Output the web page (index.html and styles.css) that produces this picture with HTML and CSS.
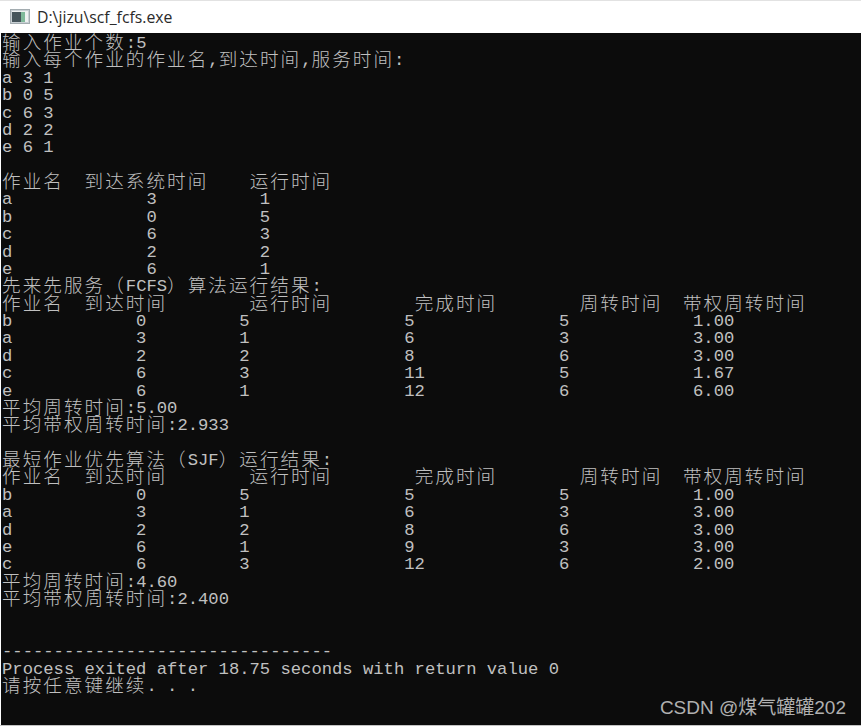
FILE: index.html
```html
<!DOCTYPE html>
<html lang="zh-CN">
<head>
<meta charset="utf-8">
<title>scf_fcfs.exe</title>
<link rel="stylesheet" href="styles.css">
</head>
<body>
<div class="window">
<header class="titlebar">
<svg class="app-icon" width="20" height="15" viewBox="0 0 20 15" aria-hidden="true">
<rect x="0.5" y="0.5" width="19" height="14" fill="#c9d0d4" stroke="#a3acb0"/>
<rect x="2" y="2" width="16" height="11" fill="#eef1f1"/>
<rect x="2" y="3" width="9" height="10" fill="#46555b"/>
<rect x="11" y="3" width="4" height="10" fill="#7fb99a"/>
</svg>
<span class="title">D:\jizu\scf_fcfs.exe</span>
</header>
<pre class="console"><span class="z">输入作业个数</span>:5
<span class="z">输入每个作业的作业名</span>,<span class="z">到达时间</span>,<span class="z">服务时间</span>:
a 3 1
b 0 5
c 6 3
d 2 2
e 6 1

<span class="z">作业名</span>  <span class="z">到达系统时间</span>    <span class="z">运行时间</span>
a             3          1
b             0          5
c             6          3
d             2          2
e             6          1
<span class="z">先来先服务（</span>FCFS<span class="z">）算法运行结果</span>:
<span class="z">作业名</span>  <span class="z">到达时间</span>        <span class="z">运行时间</span>        <span class="z">完成时间</span>        <span class="z">周转时间</span>  <span class="z">带权周转时间</span>
b            0         5               5              5            1.00
a            3         1               6              3            3.00
d            2         2               8              6            3.00
c            6         3               11             5            1.67
e            6         1               12             6            6.00
<span class="z">平均周转时间</span>:5.00
<span class="z">平均带权周转时间</span>:2.933

<span class="z">最短作业优先算法（</span>SJF<span class="z">）运行结果</span>:
<span class="z">作业名</span>  <span class="z">到达时间</span>        <span class="z">运行时间</span>        <span class="z">完成时间</span>        <span class="z">周转时间</span>  <span class="z">带权周转时间</span>
b            0         5               5              5            1.00
a            3         1               6              3            3.00
d            2         2               8              6            3.00
e            6         1               9              3            3.00
c            6         3               12             6            2.00
<span class="z">平均周转时间</span>:4.60
<span class="z">平均带权周转时间</span>:2.400


--------------------------------
Process exited after 18.75 seconds with return value 0
<span class="z">请按任意键继续</span>. . .</pre>
<div class="watermark">CSDN @煤气罐罐202</div>
</div>
</body>
</html>
```
FILE: styles.css
```css
html, body {
  margin: 0;
  padding: 0;
  background: #c4c4c4;
}
body {
  width: 861px;
  height: 726px;
  overflow: hidden;
}
.window {
  position: relative;
  display: flex;
  flex-direction: column;
  height: 725px;
  border-top: 1px solid #e2e2e2;
  box-sizing: border-box;
  background: #ffffff;
}
.titlebar {
  display: flex;
  align-items: center;
  gap: 7px;
  height: 32px;
  padding-left: 10px;
  padding-bottom: 1px;
  background: #ffffff;
  box-sizing: border-box;
}
.title {
  font-family: "Open Sans", "Liberation Sans", sans-serif;
  font-size: 15.8px;
  color: #2a2a2a;
}
.console {
  flex: 1;
  margin: 0 0 0 1px;
  padding: 2px 0 0 1px;
  background: #0c0c0c;
  color: #c0c0c0;
  font-family: "Liberation Mono", "Noto Sans CJK SC", monospace;
  font-size: 17.2px;
  line-height: 17.38px;
  overflow: hidden;
  white-space: pre;
}
.z {
  font-family: "Noto Sans CJK SC", sans-serif;
  font-size: 18.6px;
  letter-spacing: 2.04px;
  line-height: 0;
  font-weight: 300;
  vertical-align: -1px;
}
.watermark {
  position: absolute;
  right: 15px;
  bottom: 6px;
  font-family: "Liberation Sans", "Noto Sans CJK SC", sans-serif;
  font-size: 19px;
  color: #b0b0b0;
}
```
